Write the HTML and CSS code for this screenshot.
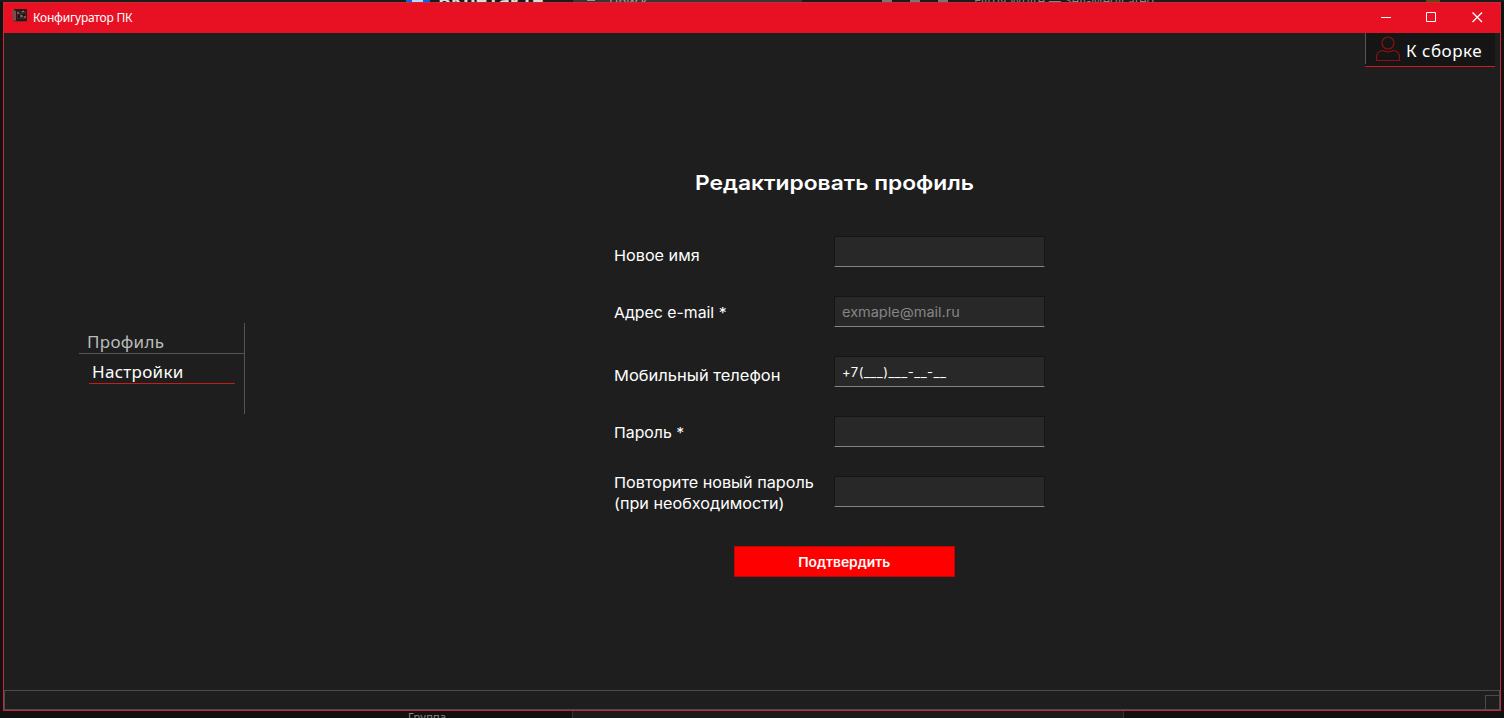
FILE: index.html
```html
<!DOCTYPE html>
<html lang="ru">
<head>
<meta charset="utf-8">
<title>Конфигуратор ПК</title>
<link rel="stylesheet" href="styles.css">
</head>
<body>
<div class="backdrop-top">
  <span class="vk-logo"></span><span class="vk-name">ВКонтакте</span>
  <span class="vk-search"><span class="lens"></span><span class="vk-find">Поиск</span></span>
  <span class="vk-controls"><i></i><i></i><i></i></span>
  <span class="vk-track">Filthy White — Self-Medicated</span>
  <span class="vk-avatar"></span>
</div>
<main class="window">
  <header class="titlebar">
    <svg class="app-icon" width="16" height="16" viewBox="0 0 16 16">
      <path d="M2 1h13v12H2z" fill="#291817"/>
      <path d="M0 1l4 2v10l-3-1z" fill="#74504d"/>
      <path d="M5 3h9v8H5z" fill="#3f2523"/>
      <path d="M6 7h2v3H6zM10 6h3v2h-3z" fill="#171213"/>
      <path d="M5 5h2M10 4l2-1M8 8h3M12 9h2" stroke="#a6928d"/>
      <path d="M2 13.500h13" stroke="#8b2424"/>
    </svg>
    <span class="app-title">Конфигуратор ПК</span>
    <div class="window-buttons">
      <svg width="46" height="30" viewBox="0 0 46 30"><path d="M18 14.500h10"/></svg>
      <svg width="46" height="30" viewBox="0 0 46 30"><path d="M17.500 9.500h9v9h-9z"/></svg>
      <svg width="46" height="30" viewBox="0 0 46 30"><path class="cross" d="M17.500 9.500l9.500 9.500M27 9.500l-9.500 9.500"/></svg>
    </div>
  </header>
  <div class="content">
    <a class="build-link">
      <svg class="user-icon" width="26" height="26" viewBox="0 0 26 26">
        <circle cx="13" cy="7" r="6"/>
        <path d="M1.500 22c0-5 2.500-7.500 6.500-7.500 2 1 3 1.300 5 1.300s3-.3 5-1.300c4 0 6.500 2.500 6.500 7.500v2.500h-23z"/>
      </svg>
      <span class="build-text">К сборке</span>
    </a>
    <nav class="sidebar">
      <a class="nav-item">Профиль</a>
      <a class="nav-item active">Настройки</a>
    </nav>
    <form class="profile">
      <h1>Редактировать профиль</h1>
      <div class="row"><label class="name">Новое имя</label><div class="field"></div></div>
      <div class="row"><label class="email">Адрес e-mail *</label><div class="field hint"><span>exmaple@mail.ru</span></div></div>
      <div class="row"><label class="phone">Мобильный телефон</label><div class="field mask">+7(___)___-__-__</div></div>
      <div class="row"><label class="pass">Пароль *</label><div class="field"></div></div>
      <div class="row"><label class="repeat">Повторите новый пароль<br>(при необходимости)</label><div class="field"></div></div>
      <button type="button" class="submit"><span>Подтвердить</span></button>
    </form>
  </div>
  <footer class="statusbar"><span class="grip"></span></footer>
</main>
<div class="backdrop-bottom"><span class="group">Группа</span><span class="panel"></span></div>
</body>
</html>
```

FILE: styles.css
```css
* { box-sizing: border-box; }
body {
  margin: 0;
  width: 1504px;
  height: 718px;
  overflow: hidden;
  background: #111;
  color: #fff;
  font-family: Inter, "Noto Sans", sans-serif;
}
.backdrop-top {
  display: flex;
  height: 2px;
  overflow: hidden;
  padding-left: 406px;
  background: #1b1b1b;
  color: #aaa;
  white-space: nowrap;
}
.vk-logo { width: 24px; background: linear-gradient(90deg, #0866e8 25%, #bdd7f8 25% 70%, #0866e8 70%); }
.vk-name { width: 104px; margin-left: 8px; font: bold 19px/19px "Open Sans", sans-serif; margin-top: -9px; color: #ddd; }
.vk-search { display: flex; width: 229px; height: 2px; margin-left: 31px; background: #363636; font: 13px/13px "Open Sans", sans-serif; }
.vk-find { margin-top: -5px; }
.lens { width: 8px; height: 1px; margin: 0 14px 1px 14px; background: #999; }
.vk-controls { display: flex; width: 172px; padding-left: 80px; gap: 18px; }
.vk-controls i { width: 10px; height: 2px; background: #777; }
.vk-track { width: 185px; font: 13px/13px "Open Sans", sans-serif; margin-top: -6px; color: #888; }
.vk-avatar { width: 14px; height: 2px; margin-left: 267px; background: #654415; }
.window {
  display: flex;
  flex-direction: column;
  width: 1498px;
  height: 709px;
  margin-left: 3px;
  border: 1px solid #c32b36;
  background: #1e1e1e;
}
.titlebar { display: flex; height: 30px; background: #e81123; }
.app-icon { margin: 5px 5px 0 8px; }
.app-title { padding-top: 6px; font: 12px/18px "Noto Sans", sans-serif; letter-spacing: -.22px; }
.window-buttons { display: flex; margin-left: auto; margin-right: -1px; }
.window-buttons svg { fill: none; stroke: #fff; stroke-width: 1; }
.window-buttons .cross { stroke-width: 1.3; }
.content { display: grid; grid-template-columns: 530px 501px 1fr; height: 657px; }
.build-link {
  grid-column: 3;
  grid-row: 1;
  justify-self: end;
  display: flex;
  width: 130px;
  height: 34px;
  margin-right: 5px;
  padding-left: 10px;
  background: linear-gradient(#555, #555) 0 0 / 1px 31px no-repeat, #151515;
  border-bottom: 1px solid #d21c1c;
}
.user-icon { margin-top: 3px; fill: none; stroke: #8c1212; stroke-width: 1.2; }
.build-text { margin-left: 5px; font: 17px/36px "Noto Sans", sans-serif; white-space: nowrap; letter-spacing: .5px; }
.sidebar {
  grid-column: 1;
  grid-row: 1;
  width: 166px;
  height: 91px;
  margin: 290px 0 0 75px;
  border-right: 1px solid #555;
  font: 17px/24px "Noto Sans", sans-serif;
  letter-spacing: .3px;
}
.nav-item { display: block; height: 31px; padding: 7px 0 0 8px; border-bottom: 1px solid #555; color: #bbb; }
.nav-item.active { height: 30px; width: 146px; margin-left: 10px; padding: 6px 0 0 3px; border-bottom: 1px solid #c51c1c; color: #fff; }
.profile { grid-column: 2; grid-row: 1; width: 431px; margin: 135px 0 0 80px; }
h1 {
  width: max-content;
  margin: 0 0 38px 81px;
  font-size: 20px;
  line-height: 30px;
  font-weight: 600;
  white-space: nowrap;
  transform: scaleX(1.14);
  transform-origin: left;
}
.row { display: flex; justify-content: space-between; height: 31px; margin-bottom: 29px; }
label { font-size: 15px; line-height: 21px; white-space: nowrap; transform: scaleX(1.08); transform-origin: left; }
.name, .phone { margin-top: 9px; }
.phone { transform: scaleX(1.1); }
.email, .pass { margin-top: 6px; }
.email, .pass { transform: scaleX(1.055); }
.repeat { margin-top: -4px; }
.field {
  width: 211px;
  height: 31px;
  padding-left: 7px;
  border: 1px solid #151515;
  border-bottom-color: #858585;
  background: #282828;
  font-size: 13px;
  line-height: 31px;
  white-space: nowrap;
}
.hint { color: #858585; }
.hint span { display: inline-block; transform: scaleX(1.115); transform-origin: left; }
.mask { letter-spacing: .5px; }
.submit {
  display: block;
  width: 221px;
  height: 31px;
  margin: 39px 0 0 120px;
  padding: 1px 0 0;
  border: 1px solid #b80808;
  background: #f00;
  color: #fff;
  font: 600 13px/28px Inter, sans-serif;
}
.submit span { display: inline-block; transform: scaleX(1.065); }
.statusbar { display: flex; align-items: flex-end; justify-content: flex-end; height: 20px; border: 1px solid #4b4b4b; }
.grip { width: 14px; height: 14px; border: 1px solid #4b4b4b; border-width: 1px 0 0 1px; }
.backdrop-bottom { display: flex; height: 7px; overflow: hidden; padding-left: 408px; }
.group { width: 164px; font: 11px/11px "Noto Sans", sans-serif; letter-spacing: .3px; color: #888; }
.panel { width: 552px; background: #1b1b1b; border: 1px solid #333; border-width: 0 1px; }
```
